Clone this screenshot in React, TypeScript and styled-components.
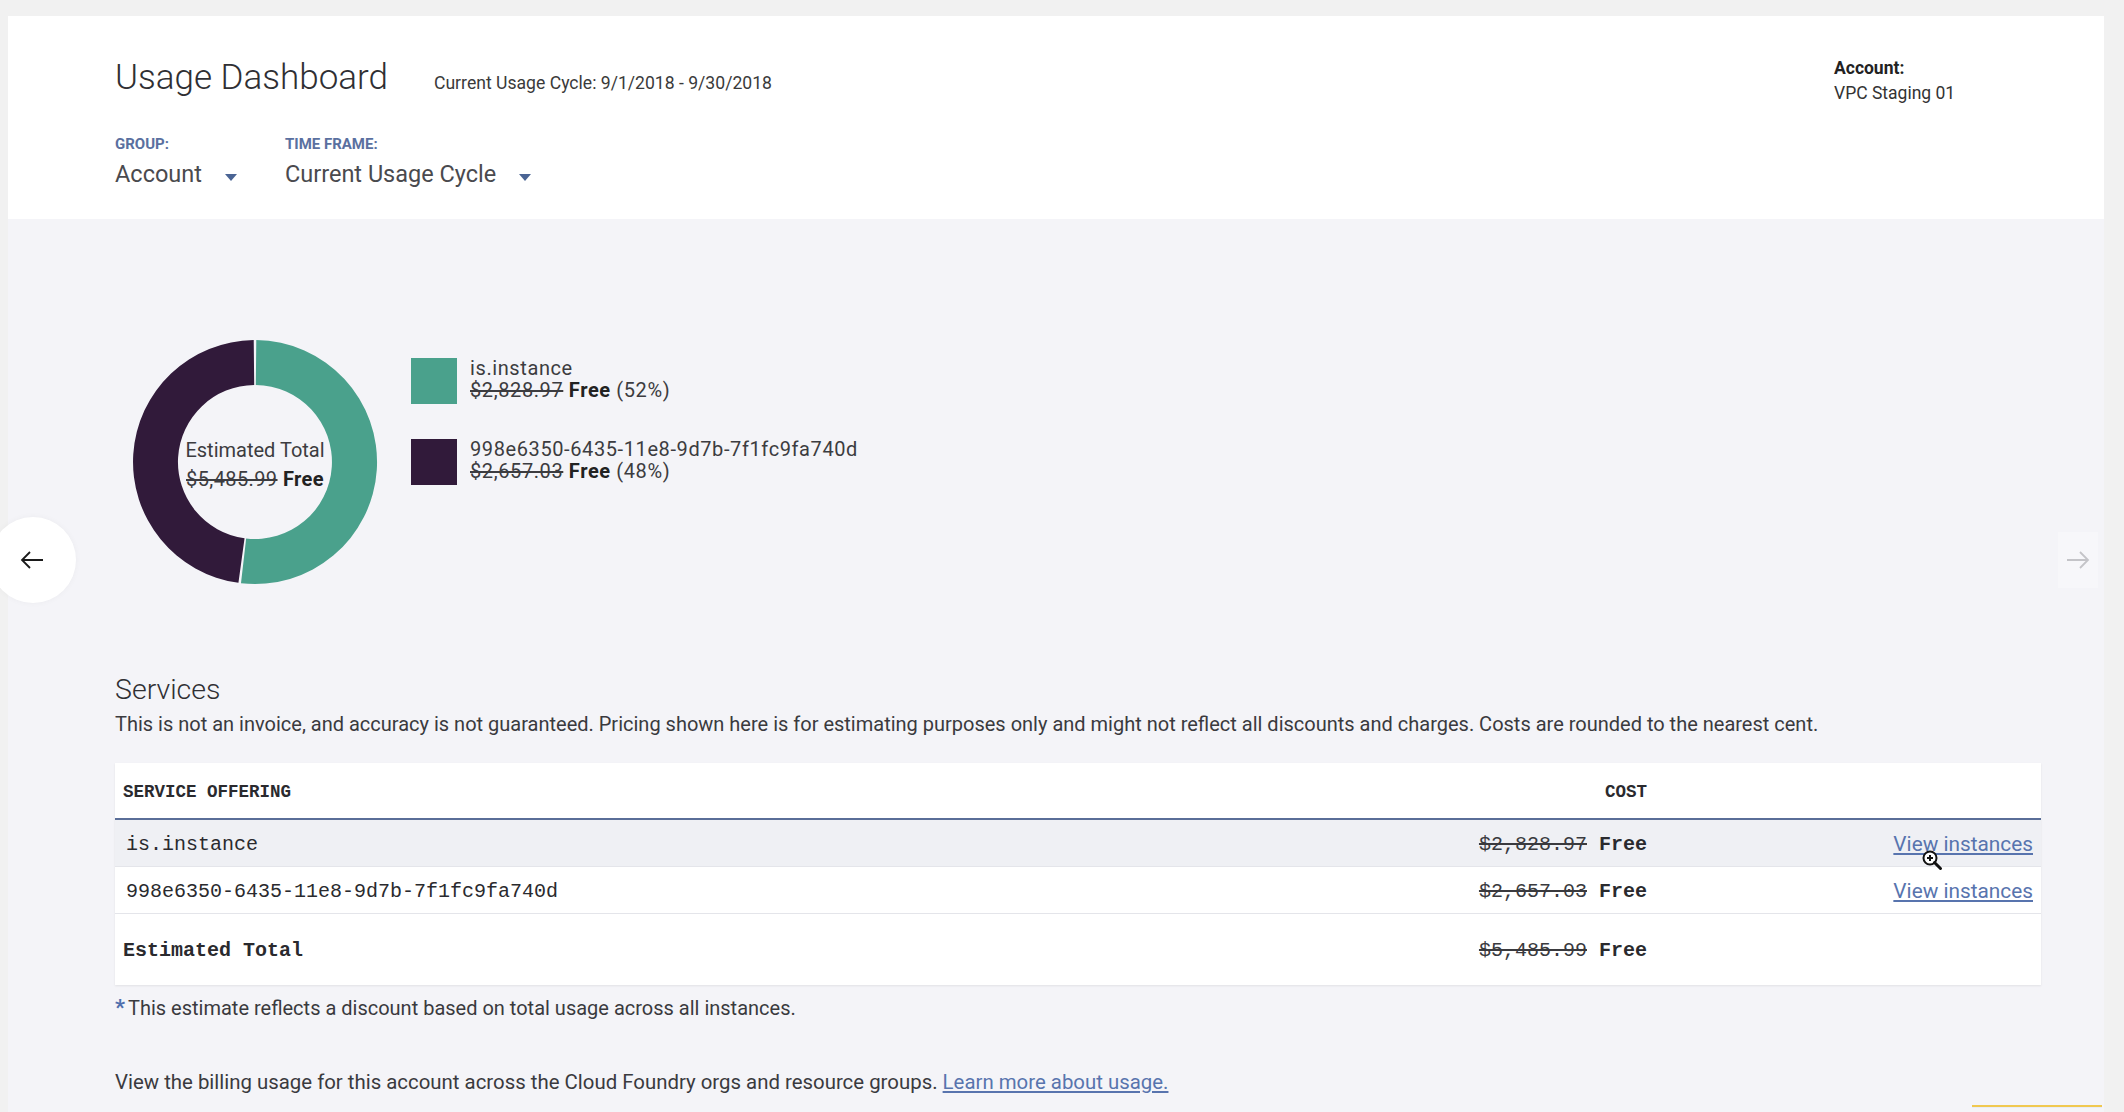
import React from 'react';
import styled, { createGlobalStyle } from 'styled-components';

interface Segment {
  name: string; // service name
  cost: string; // original price
  share: number; // percent of total
  color: string;
}

interface ServiceRow {
  name: string;
  cost: string;
}

const segments: Segment[] = [
  { name: 'is.instance', cost: '$2,828.97', share: 52, color: '#4aa18c' },
  { name: '998e6350-6435-11e8-9d7b-7f1fc9fa740d', cost: '$2,657.03', share: 48, color: '#311a3a' },
];

const services: ServiceRow[] = [
  { name: 'is.instance', cost: '$2,828.97' },
  { name: '998e6350-6435-11e8-9d7b-7f1fc9fa740d', cost: '$2,657.03' },
];

const SIZE = 246;
const OUTER = 122;
const INNER = 77;

// annular sector from a0 to a1 (degrees, 0 = 12 o'clock, clockwise)
function arcPath(a0: number, a1: number) {
  const c = SIZE / 2;
  const pt = (r: number, a: number) => {
    const rad = ((a - 90) * Math.PI) / 180;
    return `${(c + r * Math.cos(rad)).toFixed(2)} ${(c + r * Math.sin(rad)).toFixed(2)}`;
  };
  const large = a1 - a0 > 180 ? 1 : 0;
  return [
    `M ${pt(OUTER, a0)}`,
    `A ${OUTER} ${OUTER} 0 ${large} 1 ${pt(OUTER, a1)}`,
    `L ${pt(INNER, a1)}`,
    `A ${INNER} ${INNER} 0 ${large} 0 ${pt(INNER, a0)}`,
    'Z',
  ].join(' ');
}

function Donut() {
  let start = 0;
  return (
    <svg width={SIZE} height={SIZE} viewBox={`0 0 ${SIZE} ${SIZE}`}>
      {segments.map((s) => {
        const end = start + (s.share / 100) * 360;
        const d = arcPath(start + 0.6, end - 0.6);
        start = end;
        return <path key={s.name} d={d} fill={s.color} />;
      })}
    </svg>
  );
}

export default function App() {
  return (
    <>
      <GlobalStyle />
      <Page>
        <Panel>
          <Header>
            <div>
              <TitleRow>
                <Title>Usage Dashboard</Title>
                <Cycle>Current Usage Cycle: 9/1/2018 - 9/30/2018</Cycle>
              </TitleRow>
              <Filters>
                <Filter>
                  <FilterLabel>Group:</FilterLabel>
                  <Dropdown>
                    Account
                    <Caret />
                  </Dropdown>
                </Filter>
                <Filter>
                  <FilterLabel>Time frame:</FilterLabel>
                  <Dropdown>
                    Current Usage Cycle
                    <Caret />
                  </Dropdown>
                </Filter>
              </Filters>
            </div>
            <AccountBlock>
              <strong>Account:</strong>
              <span>VPC Staging 01</span>
            </AccountBlock>
          </Header>

          <Body>
            <ChartRow>
              <DonutWrap>
                <Donut />
                <DonutLabel>
                  <span>Estimated Total</span>
                  <span>
                    <Strike>$5,485.99</Strike> <Bold>Free</Bold>
                  </span>
                </DonutLabel>
              </DonutWrap>
              <Legend>
                {segments.map((s) => (
                  <LegendItem key={s.name}>
                    <Swatch $color={s.color} />
                    <LegendText>
                      <span>{s.name}</span>
                      <span>
                        <Strike>{s.cost}</Strike> <Bold>Free</Bold> ({s.share}%)
                      </span>
                    </LegendText>
                  </LegendItem>
                ))}
              </Legend>
            </ChartRow>

            <SectionTitle>Services</SectionTitle>
            <Note>
              This is not an invoice, and accuracy is not guaranteed. Pricing shown here is for estimating purposes
              only and might not reflect all discounts and charges. Costs are rounded to the nearest cent.
            </Note>

            <Table>
              <Row $kind="head">
                <span>SERVICE OFFERING</span>
                <span>COST</span>
                <span />
              </Row>
              {services.map((row, i) => (
                <Row $kind="item" $hover={i === 0} key={row.name}>
                  <span>{row.name}</span>
                  <span>
                    <MonoStrike>{row.cost}</MonoStrike> Free
                  </span>
                  <LinkCell>
                    <TableLink href="#">View instances</TableLink>
                    {i === 0 && (
                      <Cursor width="22" height="24" viewBox="0 0 22 24">
                        <circle cx="8" cy="8" r="6.5" fill="#fff" stroke="#111" strokeWidth="2" />
                        <path d="M5 8h6M8 5v6" stroke="#111" strokeWidth="2" />
                        <path d="M12.5 12.5l6 6" stroke="#111" strokeWidth="3" strokeLinecap="round" />
                      </Cursor>
                    )}
                  </LinkCell>
                </Row>
              ))}
              <Row $kind="total">
                <span>Estimated Total</span>
                <span>
                  <MonoStrike>$5,485.99</MonoStrike> Free
                </span>
                <span />
              </Row>
            </Table>

            <Footnote>
              <Star>*</Star>This estimate reflects a discount based on total usage across all instances.
            </Footnote>

            <BottomText>
              View the billing usage for this account across the Cloud Foundry orgs and resource groups.{' '}
              <TextLink href="#">Learn more about usage.</TextLink>
            </BottomText>
          </Body>

          <NavPrev aria-label="Previous">
            <svg width="26" height="22" viewBox="0 0 26 22" fill="none" stroke="#1a1a1a" strokeWidth="1.8">
              <path d="M24 11H3M11 3l-8 8 8 8" />
            </svg>
          </NavPrev>
          <NavNext aria-label="Next">
            <svg width="26" height="22" viewBox="0 0 26 22" fill="none" stroke="#c4c4c8" strokeWidth="1.8">
              <path d="M2 11h21M15 3l8 8-8 8" />
            </svg>
          </NavNext>
          <Toast />
        </Panel>
      </Page>
    </>
  );
}

const GlobalStyle = createGlobalStyle`
  html, body {
    margin: 0;
    padding: 0;
    background: #f1f1f1;
  }
  body {
    font-family: Roboto, 'Liberation Sans', sans-serif;
    color: #333;
  }
  * {
    box-sizing: border-box;
  }
`;

const Page = styled.div`
  height: 100vh;
  padding: 16px 20px 0 8px;
  overflow: hidden;
`;

const Panel = styled.div`
  position: relative;
  height: 100%;
  background: #f4f4f8;
  display: flex;
  flex-direction: column;
`;

const Header = styled.header`
  background: #fff;
  display: flex;
  justify-content: space-between;
  padding: 42px 70px 31px 107px;
`;

const TitleRow = styled.div`
  display: flex;
  align-items: baseline;
  gap: 46px;
`;

const Title = styled.h1`
  margin: 0;
  font-size: 35px;
  line-height: 40px;
  font-weight: 300;
  color: #2f2f33;
`;

const Cycle = styled.span`
  font-size: 17.6px;
  color: #3a3a3a;
`;

const Filters = styled.div`
  display: flex;
  gap: 48px;
  margin-top: 37px;
`;

const Filter = styled.div`
  display: flex;
  flex-direction: column;
  gap: 7px;
`;

const FilterLabel = styled.span`
  font-size: 15px;
  line-height: 18px;
  font-weight: 700;
  text-transform: uppercase;
  color: #5a70a0;
`;

const Dropdown = styled.div`
  display: flex;
  align-items: center;
  font-size: 23.5px;
  line-height: 28px;
  color: #4a4a4e;
`;

const Caret = styled.span`
  width: 0;
  height: 0;
  margin: 6px 0 0 23px;
  border-left: 6px solid transparent;
  border-right: 6px solid transparent;
  border-top: 7px solid #4a6494;
`;

const AccountBlock = styled.div`
  width: 200px;
  display: flex;
  flex-direction: column;
  margin-top: -2px;
  font-size: 17.5px;
  line-height: 25px;
  color: #333;

  strong {
    font-weight: 700;
    color: #222;
  }
`;

const Body = styled.main`
  flex: 1;
  padding: 120px 63px 0 107px;
`;

const ChartRow = styled.section`
  display: flex;
  align-items: flex-start;
  gap: 33px;
  padding-left: 17px;
`;

const DonutWrap = styled.div`
  position: relative;
  width: ${SIZE}px;
  height: ${SIZE}px;

  svg {
    display: block;
  }
`;

const DonutLabel = styled.div`
  position: absolute;
  inset: 0;
  display: flex;
  flex-direction: column;
  align-items: center;
  justify-content: center;
  padding-top: 5px;
  font-size: 20px;
  line-height: 29px;
  color: #3c3c40;

  span + span {
    letter-spacing: 0.4px;
  }
`;

const Strike = styled.span`
  text-decoration: line-through;
`;

const Bold = styled.span`
  font-weight: 700;
  color: #222;
`;

const Legend = styled.div`
  display: flex;
  flex-direction: column;
  gap: 35px;
  margin-top: 19px;
`;

const LegendItem = styled.div`
  display: flex;
  align-items: flex-start;
  gap: 13px;
`;

const Swatch = styled.span<{ $color: string }>`
  width: 46px;
  height: 46px;
  flex: none;
  background: ${({ $color }) => $color};
`;

const LegendText = styled.div`
  display: flex;
  flex-direction: column;
  margin-top: -1px;
  font-size: 20px;
  line-height: 22px;
  letter-spacing: 0.6px;
  color: #3c3c40;
`;

const SectionTitle = styled.h2`
  margin: 88px 0 0;
  font-size: 28.5px;
  line-height: 34px;
  font-weight: 300;
  color: #2f2f33;
`;

const Note = styled.p`
  margin: 4px 0 0;
  font-size: 20px;
  line-height: 26px;
  color: #3a3a3e;
`;

const Table = styled.div`
  margin-top: 26px;
  background: #fff;
  box-shadow: 0 1px 2px rgba(0, 0, 0, 0.08);
`;

const Row = styled.div<{ $kind: 'head' | 'item' | 'total'; $hover?: boolean }>`
  display: grid;
  grid-template-columns: 1fr auto 386px;
  align-items: center;
  padding: 0 8px 0 ${({ $kind }) => ($kind === 'item' ? 11 : 8)}px;
  font-family: 'Liberation Mono', 'DejaVu Sans Mono', monospace;
  color: #2a2a2e;
  background: ${({ $hover }) => ($hover ? '#eff0f4' : '#fff')};
  height: ${({ $kind }) => ($kind === 'head' ? 57 : $kind === 'item' ? 47 : 71)}px;
  font-size: ${({ $kind }) => ($kind === 'head' ? 17.5 : 20)}px;
  font-weight: ${({ $kind }) => ($kind === 'item' ? 400 : 700)};
  border-bottom: ${({ $kind }) =>
    $kind === 'head' ? '2px solid #5a6e98' : $kind === 'item' ? '1px solid #e4e5ea' : 'none'};

  > span:nth-child(1) {
    padding-top: 2px;
  }

  > span:nth-child(2) {
    text-align: right;
    font-weight: 700;
    padding-top: 2px;
  }
`;

const MonoStrike = styled.span`
  text-decoration: line-through;
  font-weight: 400;
  color: #3a3a3e;
`;

const LinkCell = styled.span`
  position: relative;
  text-align: right;
  padding-top: 2px;
`;

const TableLink = styled.a`
  font-family: Roboto, 'Liberation Sans', sans-serif;
  font-size: 20.8px;
  color: #5874ae;
  text-decoration: underline;
`;

const Cursor = styled.svg`
  position: absolute;
  right: 89px;
  top: 20px;
`;

const Footnote = styled.p`
  margin: 10px 0 0;
  font-size: 20px;
  line-height: 26px;
  color: #3a3a3e;
`;

const Star = styled.span`
  color: #4f6fad;
  font-weight: 700;
  font-size: 22px;
  margin-right: 3px;
`;

const BottomText = styled.p`
  margin: 48px 0 0;
  font-size: 20.4px;
  line-height: 26px;
  color: #3a3a3e;
`;

const TextLink = styled.a`
  color: #5874ae;
  text-decoration: underline;
`;

const NavPrev = styled.button`
  position: absolute;
  left: -18px;
  top: 501px;
  width: 86px;
  height: 86px;
  border: none;
  border-radius: 50%;
  background: #fff;
  box-shadow: 0 0 6px rgba(0, 0, 0, 0.04);
  display: flex;
  align-items: center;
  justify-content: center;
  padding: 0 2px 0 0;
`;

const NavNext = styled.button`
  position: absolute;
  right: 6px;
  top: 516px;
  width: 40px;
  height: 56px;
  border: none;
  background: #f7f7fa;
  display: flex;
  align-items: center;
  justify-content: center;
  padding: 0;
`;

const Toast = styled.div`
  position: absolute;
  right: 2px;
  bottom: 4px;
  width: 130px;
  height: 3px;
  border-top: 2px solid #f0c850;
  background: #e9edf5;
`;
